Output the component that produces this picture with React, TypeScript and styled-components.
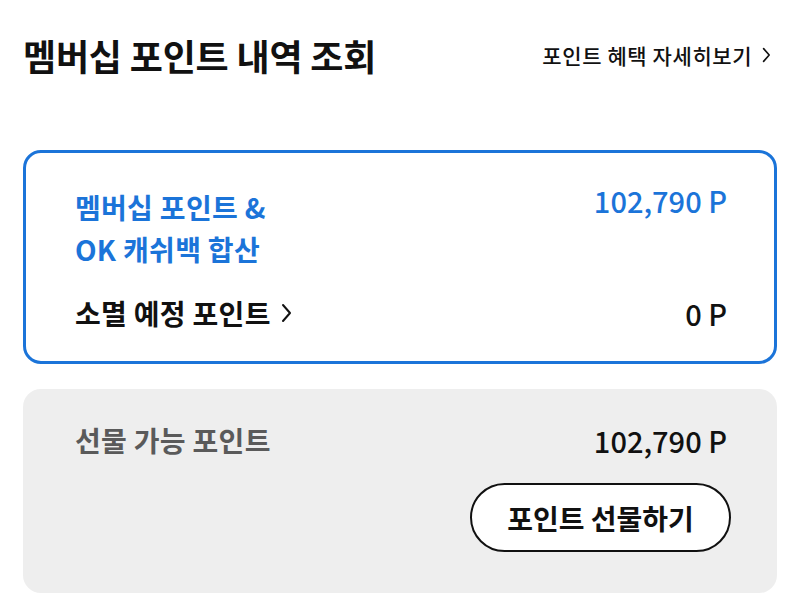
import React, { ReactElement } from "react";
import styled, { createGlobalStyle } from "styled-components";

const GlobalStyle = createGlobalStyle`
    html, body {
        margin: 0;
        padding: 0;
        background: #ffffff;
    }
    body {
        font-family: "Noto Sans CJK KR", "Noto Sans", sans-serif;
        color: #111111;
    }
`;

const Page = styled.div`
    width: 800px;
    padding: 23px 23px 0;
    box-sizing: border-box;
`;

const Header = styled.header`
    display: flex;
    align-items: center;
    justify-content: space-between;
    height: 64px;
    margin-bottom: 63px;
`;

const Title = styled.h1`
    margin: 0;
    font-size: 36px;
    font-weight: 700;
    letter-spacing: -0.2px;
`;

const DetailLink = styled.a`
    display: flex;
    align-items: center;
    gap: 10px;
    margin-right: 6px;
    font-size: 21px;
    font-weight: 500;
    letter-spacing: 0.6px;
    color: #111111;
    text-decoration: none;
`;

const Card = styled.section<{ $variant: "outline" | "filled" }>`
    box-sizing: border-box;
    border-radius: 18px;
    margin-bottom: 25px;
    ${({ $variant }) =>
        $variant === "outline"
            ? `
        border: 3px solid #1b74d9;
        padding: 33px 47px 26px 49px;
        height: 214px;
    `
            : `
        background: #eeeeee;
        padding: 30px 50px 0 52px;
        height: 204px;
    `}
`;

const Row = styled.div<{ $gap?: number }>`
    display: flex;
    justify-content: space-between;
    align-items: flex-start;
    margin-top: ${({ $gap }) => $gap ?? 0}px;
`;

const Label = styled.div<{ $tone: "blue" | "dark" | "gray" }>`
    font-size: 28px;
    font-weight: 700;
    line-height: 42px;
    letter-spacing: 0.3px;
    color: ${({ $tone }) =>
        $tone === "blue" ? "#1b74d9" : $tone === "gray" ? "#5a5a5a" : "#111111"};
    display: flex;
    align-items: center;
    gap: 10px;
`;

const Amount = styled.div<{ $tone: "blue" | "dark"; $lift?: number }>`
    font-size: 29px;
    font-weight: 500;
    line-height: 42px;
    margin-top: ${({ $lift }) => -($lift ?? 0)}px;
    color: ${({ $tone }) => ($tone === "blue" ? "#1b74d9" : "#111111")};
`;

const Actions = styled.div`
    display: flex;
    justify-content: flex-end;
    margin-top: 22px;
    margin-right: -4px;
`;

const GiftButton = styled.button`
    width: 261px;
    height: 69px;
    border-radius: 35px;
    border: 2px solid #111111;
    background: #ffffff;
    font-family: inherit;
    font-size: 28px;
    font-weight: 700;
    color: #111111;
    cursor: pointer;
`;

const Chevron = ({ size }: { size: number }): ReactElement => (
    <svg width={size * 0.55} height={size} viewBox="0 0 11 20" fill="none">
        <path d="M2 2l7 8-7 8" stroke="#111111" strokeWidth="2" strokeLinecap="round" strokeLinejoin="round" />
    </svg>
);

const App = (): ReactElement => {
    return (
        <>
            <GlobalStyle />
            <Page>
                <Header>
                    <Title>멤버십 포인트 내역 조회</Title>
                    <DetailLink href="#">
                        포인트 혜택 자세히보기
                        <Chevron size={16} />
                    </DetailLink>
                </Header>

                <Card $variant="outline">
                    <Row>
                        <Label $tone="blue">
                            멤버십 포인트 &amp;
                            <br />
                            OK 캐쉬백 합산
                        </Label>
                        <Amount $tone="blue" $lift={7}>102,790 P</Amount>
                    </Row>
                    <Row $gap={22}>
                        <Label $tone="dark">
                            소멸 예정 포인트
                            <Chevron size={20} />
                        </Label>
                        <Amount $tone="dark">0 P</Amount>
                    </Row>
                </Card>

                <Card $variant="filled">
                    <Row>
                        <Label $tone="gray">선물 가능 포인트</Label>
                        <Amount $tone="dark">102,790 P</Amount>
                    </Row>
                    <Actions>
                        <GiftButton>포인트 선물하기</GiftButton>
                    </Actions>
                </Card>
            </Page>
        </>
    );
};

export default App;
